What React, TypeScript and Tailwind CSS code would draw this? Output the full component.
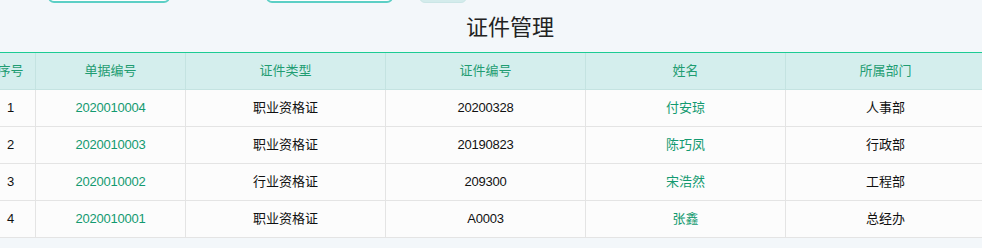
import React from "react";

const rows = [
  { no: "1", id: "2020010004", type: "职业资格证", cert: "20200328", name: "付安琼", dept: "人事部" },
  { no: "2", id: "2020010003", type: "职业资格证", cert: "20190823", name: "陈巧凤", dept: "行政部" },
  { no: "3", id: "2020010002", type: "行业资格证", cert: "209300", name: "宋浩然", dept: "工程部" },
  { no: "4", id: "2020010001", type: "职业资格证", cert: "A0003", name: "张鑫", dept: "总经办" },
];

const font = { fontFamily: '"Liberation Sans", Arial, "Noto Sans CJK SC", sans-serif' };

export default function App() {
  return (
    <div className="w-[982px] h-[248px] overflow-hidden bg-[#f3f7fa] text-[13px]" style={font}>
      <div className="flex h-[3px] items-end">
        <div className="ml-[48px] h-[30px] w-[122px] shrink-0 rounded-[6px] border-2 border-[#5ccfc5] bg-white" />
        <div className="ml-[96px] h-[30px] w-[127px] shrink-0 rounded-[6px] border-2 border-[#5ccfc5] bg-white" />
        <div className="ml-[26px] h-[30px] w-[48px] shrink-0 rounded-[6px] border border-[#cbe6e6] bg-[#d4ecec]" />
      </div>
      <div className="flex h-[49px] w-[982px] items-center justify-center pl-[38px] text-[22px] text-[#222]">
        证件管理
      </div>
      <div className="ml-[-14px] w-[1100px] border-t border-[#1ccb94]">
        <div className="flex h-[37px] border-b border-[#c4e3e1] bg-[#d4eeed] text-[#1f9d72]">
          <div className="flex w-[50px] shrink-0 items-center justify-center border-r border-[#c4e3e1]">序号</div>
          <div className="flex w-[150px] shrink-0 items-center justify-center border-r border-[#c4e3e1]">单据编号</div>
          <div className="flex w-[200px] shrink-0 items-center justify-center border-r border-[#c4e3e1]">证件类型</div>
          <div className="flex w-[200px] shrink-0 items-center justify-center border-r border-[#c4e3e1]">证件编号</div>
          <div className="flex w-[200px] shrink-0 items-center justify-center border-r border-[#c4e3e1]">姓名</div>
          <div className="flex w-[200px] shrink-0 items-center justify-center border-r border-[#c4e3e1]">所属部门</div>
        </div>
        {rows.map((r) => (
          <div key={r.no} className="flex h-[37px] border-b border-[#e4e4e4] bg-[#fcfcfc] text-[#111]">
            <div className="flex w-[50px] shrink-0 items-center justify-center border-r border-[#e4e4e4]">{r.no}</div>
            <div className="flex w-[150px] shrink-0 items-center justify-center border-r border-[#e4e4e4] tracking-[-0.25px] text-[#139a70]">{r.id}</div>
            <div className="flex w-[200px] shrink-0 items-center justify-center border-r border-[#e4e4e4]">{r.type}</div>
            <div className="flex w-[200px] shrink-0 items-center justify-center border-r border-[#e4e4e4] tracking-[-0.25px]">{r.cert}</div>
            <div className="flex w-[200px] shrink-0 items-center justify-center border-r border-[#e4e4e4] text-[#139a70]">{r.name}</div>
            <div className="flex w-[200px] shrink-0 items-center justify-center border-r border-[#e4e4e4]">{r.dept}</div>
          </div>
        ))}
      </div>
    </div>
  );
}
